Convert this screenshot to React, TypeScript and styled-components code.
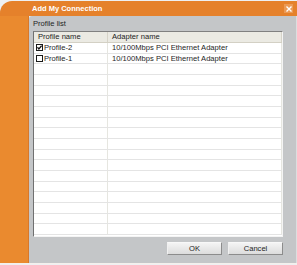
import React from 'react';
import styled, { createGlobalStyle } from 'styled-components';

const GlobalStyle = createGlobalStyle`
    html, body {
        margin: 0;
        padding: 0;
        background: #eef0f2;
    }
    body {
        font-family: 'Liberation Sans', Arial, sans-serif;
    }
`;

interface Profile {
    name: string;
    adapter: string;
    checked: boolean;
}

const profiles: Profile[] = [
    { name: 'Profile-2', adapter: '10/100Mbps PCI Ethernet Adapter', checked: true },
    { name: 'Profile-1', adapter: '10/100Mbps PCI Ethernet Adapter', checked: false },
];

const EMPTY_ROWS = 16;

const Check = ({ checked }: { checked: boolean }) => (
    <CheckBox>
        {checked && (
            <svg width="5" height="5" viewBox="0 0 5 5">
                <path d="M0.4 2.3 L1.9 3.9 L4.6 0.6" fill="none" stroke="#111" strokeWidth="1.3" />
            </svg>
        )}
    </CheckBox>
);

const App = () => {
    return (
        <>
            <GlobalStyle />
            <Window>
                <TitleBar>
                    <Title>Add My Connection</Title>
                    <CloseBtn>
                        <svg width="6" height="6" viewBox="0 0 6 6">
                            <path d="M0.5 0.5 L5.5 5.5 M5.5 0.5 L0.5 5.5" stroke="#fff" strokeWidth="1.4" />
                        </svg>
                    </CloseBtn>
                </TitleBar>
                <Body>
                    <SideStrip />
                    <Panel>
                        <Label>Profile list</Label>
                        <ListBox>
                            <HeaderRow>
                                <HeadCell width={74}>Profile name</HeadCell>
                                <HeadCell>Adapter name</HeadCell>
                            </HeaderRow>
                            <Rows>
                                {profiles.map((p) => (
                                    <Row key={p.name}>
                                        <Cell width={74}>
                                            <Check checked={p.checked} />
                                            <span>{p.name}</span>
                                        </Cell>
                                        <Cell>{p.adapter}</Cell>
                                    </Row>
                                ))}
                                {Array.from({ length: EMPTY_ROWS }).map((_, i) => (
                                    <Row key={i}>
                                        <Cell width={74} />
                                        <Cell />
                                    </Row>
                                ))}
                            </Rows>
                        </ListBox>
                        <ButtonBar>
                            <Button>OK</Button>
                            <Button>Cancel</Button>
                        </ButtonBar>
                    </Panel>
                </Body>
            </Window>
        </>
    );
};

export default App;

const Window = styled.div`
    width: 297px;
    height: 262px;
    margin-top: 1px;
    display: flex;
    flex-direction: column;
    border-bottom: 1px solid #f4f0ec;
`;

const TitleBar = styled.div`
    height: 15px;
    flex: none;
    display: flex;
    align-items: center;
    justify-content: space-between;
    background: #e5812b;
    border-top-left-radius: 12px;
    padding-left: 32px;
    padding-right: 4px;
`;

const Title = styled.div`
    color: #fff;
    font-weight: bold;
    font-size: 7.5px;
    line-height: 15px;
`;

const CloseBtn = styled.div`
    width: 9px;
    height: 9px;
    display: flex;
    align-items: center;
    justify-content: center;
    background: #ec9a55;
`;

const Body = styled.div`
    flex: 1;
    display: flex;
    min-height: 0;
`;

const SideStrip = styled.div`
    width: 29px;
    flex: none;
    background: #ea8a2f;
    border-right: 1px solid #d9782a;
    box-sizing: border-box;
`;

const Panel = styled.div`
    flex: 1;
    display: flex;
    flex-direction: column;
    background: #c4c6c8;
    padding: 4px 13px 0 4px;
    border-top-left-radius: 3px;
    border-right: 1px solid #dcdedf;
`;

const Label = styled.div`
    font-size: 7.6px;
    line-height: 8px;
    color: #1e1e1e;
    height: 8px;
    margin-bottom: 3px;
`;

const ListBox = styled.div`
    height: 204px;
    background: #fff;
    border-top: 1px solid #808080;
    border-left: 1px solid #707070;
    border-right: 1px solid #f4f4f4;
    border-bottom: 1px solid #f4f4f4;
    overflow: hidden;
    display: flex;
    flex-direction: column;
`;

const HeaderRow = styled.div`
    height: 11px;
    flex: none;
    display: flex;
    background: #ebeae3;
    border-bottom: 1px solid #d3d0c4;
    box-sizing: border-box;
`;

const HeadCell = styled.div<{ width?: number }>`
    ${({ width }) => (width ? `width: ${width}px; flex: none;` : 'flex: 1;')}
    box-sizing: border-box;
    padding-left: 4px;
    font-size: 7.6px;
    line-height: 10px;
    color: #222;
    border-right: 1px solid #d6d3c8;
`;

const Rows = styled.div`
    flex: 1;
    display: flex;
    flex-direction: column;
`;

const Row = styled.div`
    height: 10.67px;
    flex: none;
    display: flex;
    border-bottom: 1px solid #e4e4e4;
    box-sizing: border-box;
`;

const Cell = styled.div<{ width?: number }>`
    ${({ width }) => (width ? `width: ${width}px; flex: none;` : 'flex: 1;')}
    box-sizing: border-box;
    display: flex;
    align-items: center;
    padding-left: ${({ width }) => (width ? '2px' : '4px')};
    font-size: 7.6px;
    color: #1e1e1e;
    white-space: nowrap;
    border-right: 1px solid #e6e6e0;
`;

const CheckBox = styled.div`
    width: 5px;
    height: 5px;
    flex: none;
    border: 1px solid #1a1a1a;
    background: #fff;
    margin-right: 1px;
    display: flex;
    align-items: center;
    justify-content: center;
    box-sizing: content-box;
`;

const ButtonBar = styled.div`
    display: flex;
    justify-content: flex-end;
    gap: 6px;
    margin-top: 5px;
`;

const Button = styled.div`
    width: 55px;
    height: 13px;
    box-sizing: border-box;
    display: flex;
    align-items: center;
    justify-content: center;
    font-size: 7.6px;
    color: #1e1e1e;
    background: linear-gradient(#f4f4f4, #dcdcdc);
    border: 1px solid #8c8c8c;
    border-top-color: #f8f8f8;
    border-left-color: #f0f0f0;
`;
